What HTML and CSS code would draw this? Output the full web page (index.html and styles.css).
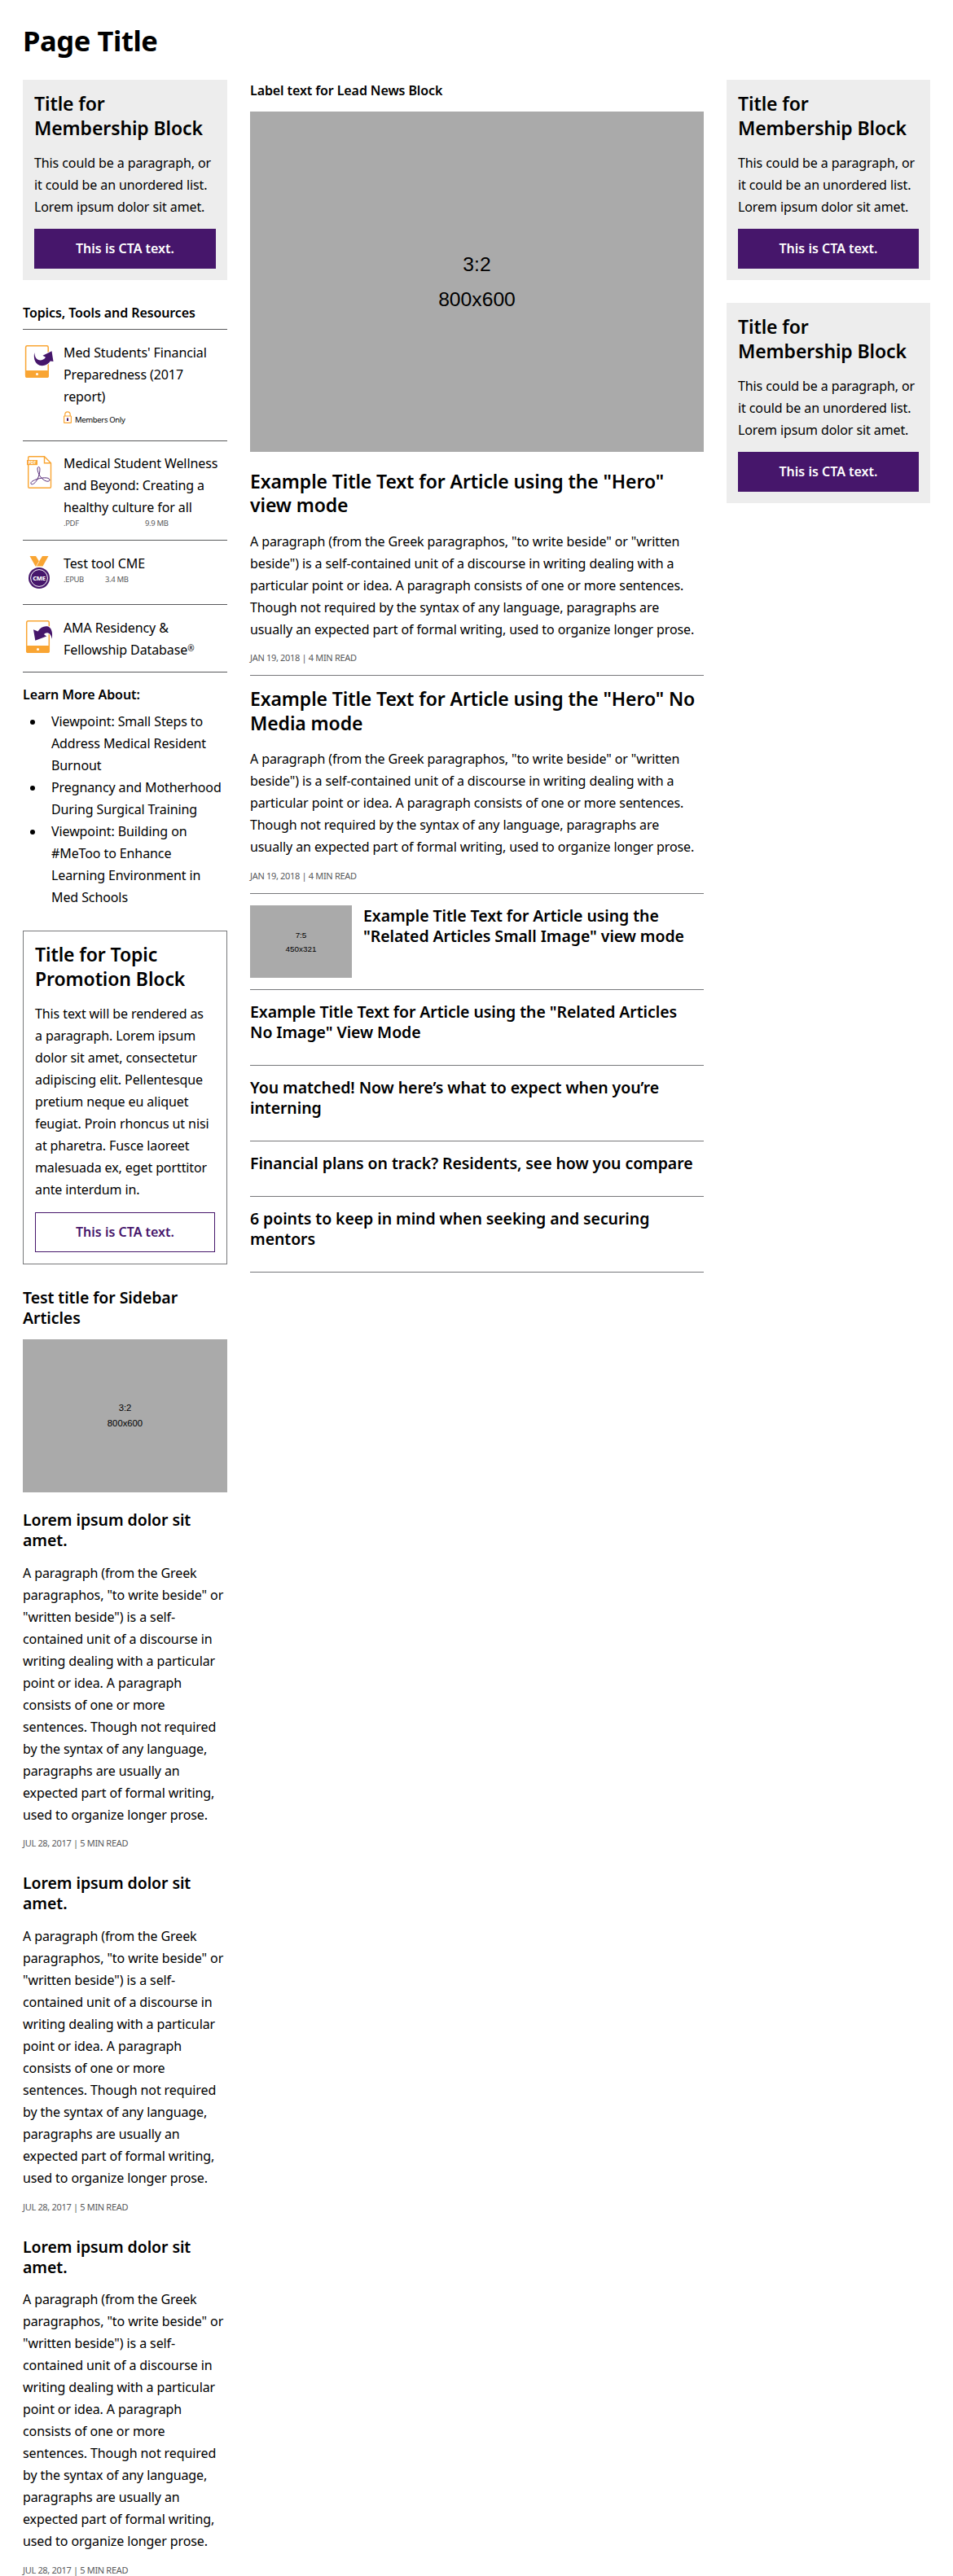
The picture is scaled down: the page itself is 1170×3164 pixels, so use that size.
FILE: index.html
```html
<!DOCTYPE html>
<html lang="en">
<head>
<meta charset="utf-8">
<title>Page Title</title>
<link rel="stylesheet" href="styles.css">
</head>
<body>
<main class="page">
  <h1 class="page-title">Page Title</h1>
  <div class="columns">
    <aside class="sidebar">
      <section class="membership">
        <h2 class="block-title">Title for<br>Membership Block</h2>
        <p class="text">This could be a paragraph, or it could be an unordered list. Lorem ipsum dolor sit amet.</p>
        <a class="cta">This is CTA text.</a>
      </section>

      <section class="tools">
        <h4 class="label">Topics, Tools and Resources</h4>
        <ul class="tool-list">
          <li class="tool">
            <svg class="tool-icon" width="40" height="40" viewBox="0 0 40 40">
              <rect x="3.6" y=".7" width="27.6" height="38.6" rx="2" fill="#fff" stroke="#f9a533" stroke-width="1.5"/>
              <path d="M3 31h29v7a2 2 0 0 1-2 2H5a2 2 0 0 1-2-2z" fill="#f9a533"/>
              <circle cx="17.5" cy="35.5" r="1.5" fill="#fff"/>
              <path d="M14.2 9C12.8 16 15 25 23.5 25.2c4.5 0 8-2.5 10.300-5.700l3.700.5L35.500 7.300 24.500 12.800l3.500 2C26 18.300 21.500 19 19 18 15.500 16.500 14.800 13 14.200 9z" fill="#46166b" stroke="#fff" stroke-width="2" paint-order="stroke"/>
            </svg>
            <div class="tool-body">
              <p class="text">Med Students' Financial Preparedness (2017 report)</p>
              <p class="members">
                <svg width="10" height="15" viewBox="0 0 10 15"><path d="M1.800 6V4a3.200 3.200 0 0 1 6.400 0v2" fill="none" stroke="#f9a533" stroke-width="1.200"/><rect x=".6" y="6" width="8.800" height="8.400" rx=".5" fill="#fff" stroke="#f9a533" stroke-width="1.200"/><rect x="4" y="8.500" width="2" height="3.500" fill="#46166b"/></svg>
                Members Only
              </p>
            </div>
          </li>
          <li class="tool">
            <svg class="tool-icon" width="40" height="40" viewBox="0 0 40 40">
              <path d="M8 .7h18.500l8 8V38a1.300 1.300 0 0 1-1.300 1.300H8A1.300 1.300 0 0 1 6.700 38V2A1.300 1.300 0 0 1 8 .7z" fill="#fff" stroke="#f9a533" stroke-width="1.400"/>
              <path d="M26.500 1v7.700h8" fill="none" stroke="#f9a533" stroke-width="1.400"/>
              <rect x="5" y="5" width="13" height="6.200" fill="#f9a533"/>
              <text x="11.500" y="10" text-anchor="middle" class="pdf-mark">PDF</text>
              <path d="M19.300 13.500c-2.400.6-1 6.500 1.200 10.300 2.200 3.600 6.500 7.700 10.500 7.400 3.500-.6 2-3.800-1.500-4.200-4-.5-8.500.2-12 1.500-4 1.400-8 3.200-7.600 5.300.6 2.400 4.600.4 6.800-3.200 2-3.200 3.600-7.400 4-10.600.3-3 .6-6.800-1.400-6.500z" fill="none" stroke="#46166b" stroke-width=".9"/>
            </svg>
            <div class="tool-body">
              <p class="text">Medical Student Wellness and Beyond: Creating a healthy culture for all</p>
              <p class="file"><span class="file-type wide">.PDF</span><span>9.9 MB</span></p>
            </div>
          </li>
          <li class="tool">
            <svg class="tool-icon" width="40" height="40" viewBox="0 0 40 40">
              <path d="M8.500 0h7.500l4 6.500L24 0h7.500l-7 12.500h-9z" fill="#f9a533"/>
              <path d="M20 6.500l-3.500 6" stroke="#fff" stroke-width=".7"/>
              <circle cx="20" cy="27" r="13" fill="#46166b"/>
              <circle cx="20" cy="27" r="10.400" fill="none" stroke="#fff" stroke-width="1"/>
              <text x="20" y="29.800" text-anchor="middle" class="cme-mark">CME</text>
            </svg>
            <div class="tool-body">
              <p class="text">Test tool CME</p>
              <p class="file"><span class="file-type">.EPUB</span><span>3.4 MB</span></p>
            </div>
          </li>
          <li class="tool">
            <svg class="tool-icon" width="40" height="40" viewBox="0 0 40 40">
              <rect x="4.700" y=".7" width="27.600" height="38.600" rx="2" fill="#fff" stroke="#f9a533" stroke-width="1.500"/>
              <path d="M4 31h29v7a2 2 0 0 1-2 2H6a2 2 0 0 1-2-2z" fill="#f9a533"/>
              <circle cx="18.500" cy="35.500" r="1.500" fill="#fff"/>
              <path d="M13 11.300l5.500 2.200C21.500 8.500 26 6.600 30 7.300c5 1 7 7 5.800 15.400C35 18.500 33 15.500 30 15.300c-1.800 0-3 .7-4 1.900l3.200 2.300-13.900 5.200z" fill="#46166b" stroke="#fff" stroke-width="2" paint-order="stroke"/>
            </svg>
            <div class="tool-body">
              <p class="text">AMA Residency &amp;<br>Fellowship Database<span class="reg">®</span></p>
            </div>
          </li>
        </ul>
      </section>

      <section class="learn">
        <h4 class="label">Learn More About:</h4>
        <ul class="learn-list text">
          <li>Viewpoint: Small Steps to Address Medical Resident Burnout</li>
          <li>Pregnancy and Motherhood During Surgical Training</li>
          <li>Viewpoint: Building on #MeToo to Enhance Learning Environment in Med Schools</li>
        </ul>
      </section>

      <section class="promo">
        <h2 class="block-title">Title for Topic<br>Promotion Block</h2>
        <p class="text">This text will be rendered as a&nbsp;paragraph. Lorem ipsum dolor sit amet, consectetur adipiscing elit. Pellentesque pretium neque eu aliquet feugiat. Proin rhoncus ut nisi at pharetra. Fusce laoreet malesuada ex, eget porttitor ante interdum in.</p>
        <a class="cta cta-outline">This is CTA text.</a>
      </section>

      <section class="side-articles">
        <h3 class="article-title">Test title for Sidebar Articles</h3>
        <div class="placeholder side-image"><span>3:2</span><span>800x600</span></div>
        <article class="side-article">
          <h3 class="article-title">Lorem ipsum dolor sit amet.</h3>
          <p class="text">A paragraph (from the Greek paragraphos, "to write beside" or "written beside") is a self-contained unit of a discourse in writing dealing with a particular point or idea. A paragraph consists of one or more sentences. Though not required by the syntax of any language, paragraphs are usually an expected part of formal writing, used to organize longer prose.</p>
          <p class="date">JUL 28, 2017 | 5 MIN READ</p>
        </article>
        <article class="side-article">
          <h3 class="article-title">Lorem ipsum dolor sit amet.</h3>
          <p class="text">A paragraph (from the Greek paragraphos, "to write beside" or "written beside") is a self-contained unit of a discourse in writing dealing with a particular point or idea. A paragraph consists of one or more sentences. Though not required by the syntax of any language, paragraphs are usually an expected part of formal writing, used to organize longer prose.</p>
          <p class="date">JUL 28, 2017 | 5 MIN READ</p>
        </article>
        <article class="side-article">
          <h3 class="article-title">Lorem ipsum dolor sit amet.</h3>
          <p class="text">A paragraph (from the Greek paragraphos, "to write beside" or "written beside") is a self-contained unit of a discourse in writing dealing with a particular point or idea. A paragraph consists of one or more sentences. Though not required by the syntax of any language, paragraphs are usually an expected part of formal writing, used to organize longer prose.</p>
          <p class="date">JUL 28, 2017 | 5 MIN READ</p>
        </article>
      </section>
    </aside>

    <section class="news">
      <h4 class="label">Label text for Lead News Block</h4>
      <div class="placeholder hero-image"><span>3:2</span><span>800x600</span></div>
      <article class="hero hero-media">
        <h2 class="block-title">Example Title Text for Article using the "Hero" view mode</h2>
        <p class="text">A paragraph (from the Greek paragraphos, "to write beside" or "written beside") is a self-contained unit of a discourse in writing dealing with a particular point or idea. A paragraph consists of one or more sentences. Though not required by the syntax of any language, paragraphs are usually an expected part of formal writing, used to organize longer prose.</p>
        <p class="date">JAN 19, 2018 | 4 MIN READ</p>
      </article>
      <article class="hero">
        <h2 class="block-title">Example Title Text for Article using the "Hero" No Media mode</h2>
        <p class="text">A paragraph (from the Greek paragraphos, "to write beside" or "written beside") is a self-contained unit of a discourse in writing dealing with a particular point or idea. A paragraph consists of one or more sentences. Though not required by the syntax of any language, paragraphs are usually an expected part of formal writing, used to organize longer prose.</p>
        <p class="date">JAN 19, 2018 | 4 MIN READ</p>
      </article>
      <article class="related related-media">
        <div class="placeholder thumb"><span>7:5</span><span>450x321</span></div>
        <h3 class="article-title">Example Title Text for Article using the "Related Articles Small Image" view mode</h3>
      </article>
      <article class="related"><h3 class="article-title">Example Title Text for Article using the "Related Articles No&nbsp;Image" View Mode</h3></article>
      <article class="related"><h3 class="article-title">You matched! Now here’s what to expect when you’re interning</h3></article>
      <article class="related"><h3 class="article-title">Financial plans on track? Residents, see how you compare</h3></article>
      <article class="related"><h3 class="article-title">6 points to keep in mind when seeking and securing mentors</h3></article>
    </section>

    <aside class="rail">
      <section class="membership">
        <h2 class="block-title">Title for<br>Membership Block</h2>
        <p class="text">This could be a paragraph, or it could be an unordered list. Lorem ipsum dolor sit amet.</p>
        <a class="cta">This is CTA text.</a>
      </section>
      <section class="membership">
        <h2 class="block-title">Title for<br>Membership Block</h2>
        <p class="text">This could be a paragraph, or it could be an unordered list. Lorem ipsum dolor sit amet.</p>
        <a class="cta">This is CTA text.</a>
      </section>
    </aside>
  </div>
</main>
</body>
</html>
```
FILE: styles.css
```css
* { box-sizing: border-box; margin: 0; padding: 0; }

body {
  background: #fff;
  color: #000;
  font-family: "Noto Sans", "Open Sans", sans-serif;
}

ul { list-style: none; }

.page { padding: 29px 28px 0; height: 3164px; }

.page-title {
  font-size: 34.5px;
  line-height: 42px;
  font-weight: 700;
  letter-spacing: -0.4px;
  margin-bottom: 27px;
}

.columns {
  display: grid;
  grid-template-columns: 251px 557px 250px;
  gap: 28px;
  align-items: start;
}

/* Type */
.text { font-size: 16px; line-height: 27px; letter-spacing: -0.1px; }
.label { font-size: 16px; line-height: 27px; font-weight: 600; letter-spacing: -0.1px; }
.block-title { font-size: 23px; line-height: 29.7px; font-weight: 600; letter-spacing: -0.1px; }
.article-title { font-size: 19.5px; line-height: 25px; font-weight: 600; letter-spacing: -0.08px; }
.date { font-size: 11px; line-height: 15px; letter-spacing: -0.32px; color: #58595b; }
.reg { font-size: 10px; line-height: 0; vertical-align: 4px; }

/* Promotional boxes */
.membership { background: #ededed; padding: 15px 14px 14px; }
.membership .text { margin: 15px 0 12.5px; }
.rail { display: grid; gap: 28px; }

.cta {
  display: block;
  background: #46166b;
  color: #fff;
  font-size: 16px;
  font-weight: 600;
  line-height: 49px;
  text-align: center;
}

.cta-outline {
  background: #fff;
  border: 1px solid #46166b;
  color: #46166b;
  line-height: 47px;
}

.promo { border: 1px solid #77787b; padding: 14px; margin-top: 27.5px; }
.promo .text { margin: 14.5px -2px 14px 0; }

/* Tools */
.tools { margin-top: 27.2px; }
.tool-list { border-top: 1px solid #58595b; margin-top: 6px; }
.tool {
  display: flex;
  gap: 10px;
  padding: 14.8px 0 13.8px;
  border-bottom: 1px solid #58595b;
}
.tool-icon { flex: none; margin: 4px 0 5px; }
.tool-body { flex: 1; }
.members {
  display: flex;
  gap: 4px;
  margin-top: 4px;
  font-size: 9.5px;
  line-height: 22px;
  height: 22px;
  letter-spacing: -0.35px;
}
.file { display: flex; font-size: 9.5px; line-height: 12px; letter-spacing: -0.35px; color: #58595b; }
.file-type { width: 51px; }
.file-type.wide { width: 100px; }
.pdf-mark { font-size: 5px; font-weight: 700; fill: #fff; }
.cme-mark { font-size: 7.5px; font-weight: 800; fill: #fff; letter-spacing: -0.2px; }

/* Learn more */
.learn { margin-top: 13.5px; }
.learn-list { margin-top: 6px; }
.learn-list li { display: flex; }
.learn-list li::before {
  content: "";
  flex: none;
  width: 6px;
  height: 6px;
  margin: 11.5px 20px 0 9px;
  border-radius: 50%;
  background: #000;
}

/* Image placeholders */
.placeholder {
  display: flex;
  flex-direction: column;
  align-items: center;
  justify-content: center;
  background: #aaa;
  font-family: "Liberation Sans", Arial, sans-serif;
}
.hero-image { aspect-ratio: 4 / 3; margin-top: 12px; padding-top: 2px; font-size: 24.7px; line-height: 42.5px; }
.side-image { aspect-ratio: 4 / 3; margin-top: 13.5px; font-size: 11.3px; line-height: 19.3px; }
.thumb { width: 125px; height: 89px; flex: none; padding-top: 1px; font-size: 9.9px; line-height: 17px; }

/* Articles */
.side-articles { margin-top: 28px; }
.side-article { margin-top: 29px; }
.side-image + .side-article { margin-top: 21px; }
.side-article .text { margin: 14.5px 0 13.7px; }

.hero { padding: 14px 0; border-bottom: 1px solid #77787b; }
.hero-media { padding-top: 22px; }
.hero .text { margin: 15.4px 0 13.6px; }

.related { padding: 14px 0 28px; border-bottom: 1px solid #77787b; }
.related-media { display: flex; gap: 14px; padding-bottom: 14px; }
```
